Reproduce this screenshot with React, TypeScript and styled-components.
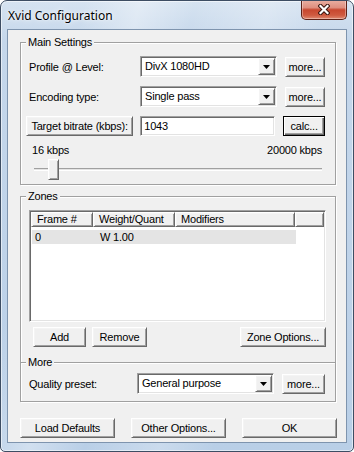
import React from 'react'
import styled, { createGlobalStyle, css } from 'styled-components'

const GlobalStyle = createGlobalStyle`
  html, body {
    margin: 0;
    padding: 0;
    background: #ffffff;
  }
  body {
    font-family: "Liberation Sans", Arial, sans-serif;
    font-size: 11px;
    letter-spacing: -0.2px;
    color: #000;
  }
  * {
    box-sizing: border-box;
  }
`

// classic 3D edges
const raised = css`
  background: #f0f0f0;
  border: 1px solid;
  border-color: #ffffff #696969 #696969 #ffffff;
  box-shadow: inset 1px 1px 0 #f4f4f4, inset -1px -1px 0 #a0a0a0;
`

const sunken = css`
  border: 1px solid;
  border-color: #a0a0a0 #ffffff #ffffff #a0a0a0;
  box-shadow: inset 1px 1px 0 #696969, inset -1px -1px 0 #e3e3e3;
  padding: 1px;
`

const Window = styled.div`
  width: 354px;
  height: 452px;
  display: flex;
  flex-direction: column;
  border: 1px solid #3d4d63;
  border-radius: 7px 7px 5px 5px;
  padding: 0 6px 8px 6px;
  overflow: hidden;
  background: linear-gradient(
      104deg,
      rgba(255, 255, 255, 0) 18%,
      rgba(255, 255, 255, 0.35) 30%,
      rgba(255, 255, 255, 0) 42%,
      rgba(255, 255, 255, 0.25) 58%,
      rgba(255, 255, 255, 0) 70%
    ),
    linear-gradient(180deg, #d6e3f1 0%, #c5d7eb 40px, #b9cfe7 100%);
  box-shadow: inset 0 0 0 1px rgba(255, 255, 255, 0.55);
`

const TitleBar = styled.div`
  height: 28px;
  display: flex;
  align-items: center;
  justify-content: space-between;
  padding-left: 1px;
`

const Title = styled.div`
  font-family: "Noto Sans", "Open Sans", sans-serif;
  font-size: 12px;
  letter-spacing: 0;
  color: #000;
  text-shadow: 0 0 6px rgba(255, 255, 255, 0.95), 0 0 2px rgba(255, 255, 255, 0.9);
`

const CloseButton = styled.div`
  align-self: flex-start;
  margin-top: -1px;
  width: 46px;
  height: 20px;
  display: flex;
  align-items: center;
  justify-content: center;
  border: 1px solid #5d2117;
  border-top: none;
  border-radius: 0 0 5px 5px;
  background: linear-gradient(
    180deg,
    #eab0a3 0%,
    #df8f7f 40%,
    #c8472f 52%,
    #cf5a40 80%,
    #e08a72 100%
  );
  box-shadow: inset 0 0 0 1px rgba(255, 255, 255, 0.35);
`

const Client = styled.div`
  flex: 1;
  display: flex;
  flex-direction: column;
  background: #f0f0f0;
  border: 1px solid #7e94ae;
  padding: 0 10px 0 12px;
`

const GroupBox = styled.div<{ $mt: number; $open?: boolean }>`
  margin-top: ${(p) => p.$mt}px;
  display: flex;
  flex-direction: column;
  border: 1px solid #a0a0a0;
  ${(p) => p.$open && 'border-bottom: none;'}
  box-shadow: inset 1px 1px 0 #ffffff, 1px 1px 0 #ffffff;
`

const GroupLegend = styled.div`
  align-self: flex-start;
  margin: -7px 0 0 5px;
  padding: 0 2px;
  height: 13px;
  line-height: 13px;
  background: #f0f0f0;
`

const GroupBody = styled.div<{ $pad: string }>`
  display: flex;
  flex-direction: column;
  padding: ${(p) => p.$pad};
`

const FormRow = styled.div<{ $mt: number }>`
  margin-top: ${(p) => p.$mt}px;
  height: 21px;
  display: flex;
  align-items: center;
`

const FieldLabel = styled.div<{ $w: number }>`
  width: ${(p) => p.$w}px;
  padding-left: 3px;
  white-space: nowrap;
`

const ComboBox = styled.div<{ $w: number }>`
  ${sunken};
  width: ${(p) => p.$w}px;
  height: 21px;
  display: flex;
  background: #ffffff;
`

const ComboValue = styled.div`
  flex: 1;
  padding-left: 3px;
  line-height: 17px;
  white-space: nowrap;
`

const DropButton = styled.div`
  ${raised};
  width: 17px;
  height: 17px;
  display: flex;
  align-items: center;
  justify-content: center;
`

const PushButton = styled.div<{ $w: number; $default?: boolean; $ml?: number | 'auto' }>`
  ${raised};
  width: ${(p) => p.$w}px;
  height: 20px;
  margin-left: ${(p) => (p.$ml === 'auto' ? 'auto' : `${p.$ml ?? 0}px`)};
  display: flex;
  align-items: center;
  justify-content: center;
  white-space: nowrap;
  ${(p) =>
    p.$default &&
    css`
      border-color: #000;
      box-shadow: inset 1px 1px 0 #ffffff, inset -1px -1px 0 #696969, inset -2px -2px 0 #a0a0a0;
    `}
`

const TextField = styled.div<{ $w: number }>`
  ${sunken};
  width: ${(p) => p.$w}px;
  height: 20px;
  margin-left: 7px;
  background: #ffffff;
  padding-left: 3px;
  line-height: 16px;
`

const ScaleLabels = styled.div`
  margin-top: 8px;
  height: 13px;
  line-height: 13px;
  display: flex;
  justify-content: space-between;
  padding: 0 3px 0 6px;
`

const Slider = styled.div`
  position: relative;
  margin: 1px 0 0 8px;
  width: 288px;
  height: 23px;
`

const Track = styled.div`
  position: absolute;
  left: 0;
  right: 0;
  top: 10px;
  height: 3px;
  border-top: 1px solid #a0a0a0;
  border-bottom: 1px solid #ffffff;
  background: #e3e3e3;
`

const Thumb = styled.div`
  ${raised};
  position: absolute;
  top: 1px;
  width: 11px;
  height: 21px;
`

const ListView = styled.div`
  ${sunken};
  margin-top: 7px;
  height: 112px;
  background: #ffffff;
  display: flex;
  flex-direction: column;
`

const ListHeader = styled.div`
  display: flex;
  height: 15px;
`

const HeaderCell = styled.div<{ $w?: number }>`
  ${raised};
  ${(p) => (p.$w ? `width: ${p.$w}px;` : 'flex: 1;')}
  padding-left: 5px;
  line-height: 13px;
  white-space: nowrap;
`

const ListRow = styled.div<{ $selected?: boolean }>`
  display: flex;
  margin: 3px 0 0 1px;
  width: 264px;
  height: 14px;
  line-height: 14px;
  background: ${(p) => (p.$selected ? '#e4e4e4' : 'transparent')};
`

const ListCell = styled.div<{ $w: number; $pad: number }>`
  width: ${(p) => p.$w}px;
  padding-left: ${(p) => p.$pad}px;
  white-space: nowrap;
`

const ButtonRow = styled.div`
  margin-top: 5px;
  display: flex;
  align-items: center;
`

const DialogButtons = styled.div`
  margin-top: 16px;
  display: flex;
  justify-content: space-between;
  width: 317px;
`

const CloseIcon = () => (
  <svg width="12" height="11" viewBox="0 0 12 11">
    <path d="M2.5 2 L9.5 9 M9.5 2 L2.5 9" stroke="#3a1610" strokeWidth="4.2" strokeLinecap="square" />
    <path d="M2.5 2 L9.5 9 M9.5 2 L2.5 9" stroke="#ffffff" strokeWidth="2.2" strokeLinecap="square" />
  </svg>
)

const ArrowIcon = () => (
  <svg width="7" height="4" viewBox="0 0 7 4">
    <path d="M0 0 H7 L3.5 4 Z" fill="#000" />
  </svg>
)

const Combo = ({ width, value }: { width: number; value: string }) => (
  <ComboBox $w={width}>
    <ComboValue>{value}</ComboValue>
    <DropButton>
      <ArrowIcon />
    </DropButton>
  </ComboBox>
)

const columns = [
  { name: 'Frame #', width: 62 },
  { name: 'Weight/Quant', width: 82 },
  { name: 'Modifiers', width: 120 },
]

const zones = [{ frame: '0', weight: 'W 1.00', modifiers: '' }]

const bitrate = { min: 0, max: 20000, value: 1043 }
const SLIDER_W = 288
const THUMB_W = 11

export default function App() {
  const thumbLeft = Math.round(((bitrate.value - bitrate.min) / (bitrate.max - bitrate.min)) * (SLIDER_W - THUMB_W))

  return (
    <>
      <GlobalStyle />
      <Window>
        <TitleBar>
          <Title>Xvid Configuration</Title>
          <CloseButton>
            <CloseIcon />
          </CloseButton>
        </TitleBar>
        <Client>
          <GroupBox $mt={12}>
            <GroupLegend>Main Settings</GroupLegend>
            <GroupBody $pad="0 10px 3px 5px">
              <FormRow $mt={7}>
                <FieldLabel $w={114}>Profile @ Level:</FieldLabel>
                <Combo width={137} value="DivX 1080HD" />
                <PushButton $w={40} $ml={8}>
                  more...
                </PushButton>
              </FormRow>
              <FormRow $mt={9}>
                <FieldLabel $w={114}>Encoding type:</FieldLabel>
                <Combo width={137} value="Single pass" />
                <PushButton $w={40} $ml={8}>
                  more...
                </PushButton>
              </FormRow>
              <FormRow $mt={8}>
                <PushButton $w={108}>Target bitrate (kbps):</PushButton>
                <TextField $w={136}>{bitrate.value}</TextField>
                <PushButton $w={42} $ml={8} $default>
                  calc...
                </PushButton>
              </FormRow>
              <ScaleLabels>
                <span>16 kbps</span>
                <span>20000 kbps</span>
              </ScaleLabels>
              <Slider>
                <Track />
                <Thumb style={{ left: thumbLeft }} />
              </Slider>
            </GroupBody>
          </GroupBox>

          <GroupBox $mt={11} $open>
            <GroupLegend>Zones</GroupLegend>
            <GroupBody $pad="0 9px 15px 8px">
              <ListView>
                <ListHeader>
                  {columns.map((c) => (
                    <HeaderCell key={c.name} $w={c.width}>
                      {c.name}
                    </HeaderCell>
                  ))}
                  <HeaderCell />
                </ListHeader>
                {zones.map((z) => (
                  <ListRow key={z.frame} $selected>
                    <ListCell $w={62} $pad={3}>
                      {z.frame}
                    </ListCell>
                    <ListCell $w={82} $pad={6}>
                      {z.weight}
                    </ListCell>
                    <ListCell $w={120} $pad={6}>
                      {z.modifiers}
                    </ListCell>
                  </ListRow>
                ))}
              </ListView>
              <ButtonRow>
                <PushButton $w={53} $ml={4}>
                  Add
                </PushButton>
                <PushButton $w={55} $ml={6}>
                  Remove
                </PushButton>
                <PushButton $w={86} $ml="auto">
                  Zone Options...
                </PushButton>
              </ButtonRow>
            </GroupBody>
          </GroupBox>

          <GroupBox $mt={0}>
            <GroupLegend>More</GroupLegend>
            <GroupBody $pad="0 9px 7px 5px">
              <FormRow $mt={4}>
                <FieldLabel $w={111}>Quality preset:</FieldLabel>
                <Combo width={137} value="General purpose" />
                <PushButton $w={43} $ml={8}>
                  more...
                </PushButton>
              </FormRow>
            </GroupBody>
          </GroupBox>

          <DialogButtons>
            <PushButton $w={95}>Load Defaults</PushButton>
            <PushButton $w={95}>Other Options...</PushButton>
            <PushButton $w={95}>OK</PushButton>
          </DialogButtons>
        </Client>
      </Window>
    </>
  )
}
